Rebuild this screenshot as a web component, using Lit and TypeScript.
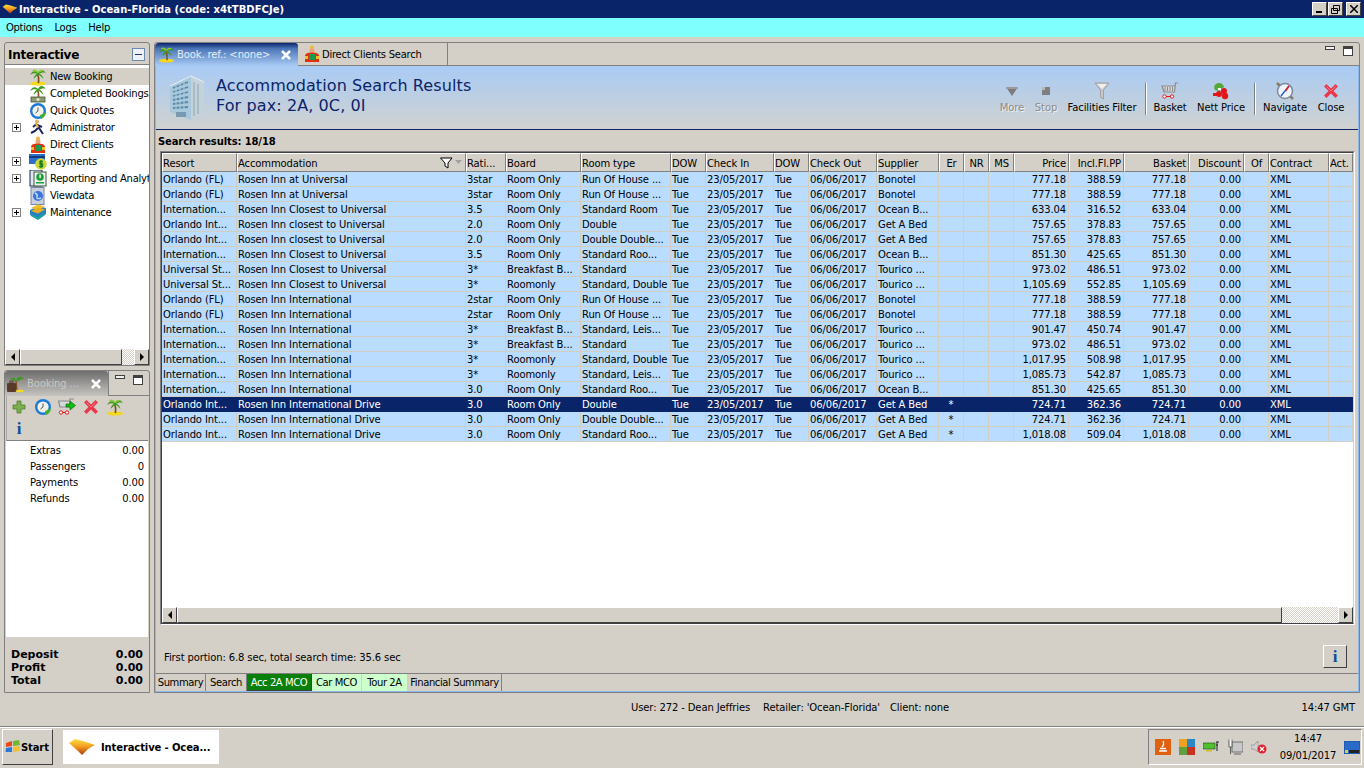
import { LitElement, html, svg, css } from "lit";
import { customElement } from "lit/decorators.js";

const ic = (w: number, h: number, vb: string, body: unknown) =>
  html`<svg class="ic" width=${w} height=${h} viewBox=${vb}>${body}</svg>`;

const palm = (w = 18) => ic(w, w, "0 0 18 18", svg`
  <ellipse cx="9" cy="15.5" rx="8" ry="2" fill="#f4d81c"/>
  <path d="M9.5 15C10 11 9.5 8 8.5 5.5" stroke="#7a4b1a" stroke-width="1.6" fill="none"/>
  <path d="M9 5C6 2 3 3 1 7 4 5 6 5 9 6ZM9 5C11 1 14 1 17 5 14 4 12 5 9 6ZM9 5C7 6 5 8 4.5 11 6.5 9 8 8 9 6.5ZM9 5C12 6 14 8 14.5 11 12.5 8.5 11 7.5 9 6.5Z" fill="#3d9a1c"/>
  <path d="M9 4C7 1 5 1 3 3 5 3 7 4 9 5ZM9 4C11 1.5 13 1.5 15 3 13 3 11 4 9 5Z" fill="#8ac832"/>`);
const palmMoney = () => ic(18, 18, "0 0 18 18", svg`
  <path d="M9.5 12C10 9 9.5 7 8.5 5" stroke="#7a4b1a" stroke-width="1.6" fill="none"/>
  <path d="M9 4C6 1 3 2 1 6 4 4 6 4 9 5ZM9 4C11 0 14 0 17 4 14 3 12 4 9 5ZM9 4C7 5 5 7 4.5 10 6.5 8 8 7 9 5.5ZM9 4C12 5 14 7 14.5 10 12.5 7.5 11 6.5 9 5.5Z" fill="#3d9a1c"/>
  <rect x="2" y="12" width="14" height="5" fill="#8c9a70" stroke="#4a5238" stroke-width=".8"/><circle cx="9" cy="14.5" r="1.5" fill="#e8ecd0"/>`);
const clock = () => ic(18, 18, "0 0 18 18", svg`
  <circle cx="9" cy="9" r="8" fill="#1e78d8"/><circle cx="9" cy="9" r="5.6" fill="#f2f2ea"/>
  <path d="M9 5.5V9L6.5 11" stroke="#555" fill="none"/>
  <path d="M12 17C15 16 17 13 17 10L13.5 12 11 13Z" fill="#44b030"/>`);
const runner = () => ic(18, 18, "0 0 18 18", svg`
  <circle cx="8" cy="2.5" r="2" fill="#e8b070"/>
  <path d="M7 4.5 10 9 14 15M9 9 6 12 2 14M7 5.5 13 8M7 5.5 4 8" stroke="#1c2460" stroke-width="2" fill="none"/>
  <path d="M7 4.5l2 4" stroke="#e8c030" stroke-width="2"/>`);
const santa = () => ic(18, 18, "0 0 18 18", svg`
  <circle cx="9" cy="2.5" r="2" fill="#f0b830"/><circle cx="9" cy="5.5" r="2.5" fill="#e8a878"/>
  <path d="M2 17V11C2 8.5 5 7.5 9 7.5S16 8.5 16 11V17Z" fill="#e03010"/>
  <rect x="6" y="9" width="6" height="6" fill="#1c9a50"/><rect x="2" y="11" width="3" height="3" fill="#f0c020"/><rect x="13" y="11" width="3" height="3" fill="#f0c020"/>`);
const payments = () => ic(18, 18, "0 0 18 18", svg`
  <rect x="0" y="1" width="16" height="10" fill="#2a70c8"/><rect x="0" y="3" width="16" height="2" fill="#123a80"/>
  <circle cx="12" cy="11" r="5.8" fill="#c8d838"/>
  <path d="M14 8.5H11V11H13.5V13.5H10M12 7V15" stroke="#1c7a20" stroke-width="1.3" fill="none"/>`);
const report = () => ic(18, 18, "0 0 18 18", svg`
  <rect x="1" y="0" width="12" height="16" fill="#dfe6ee" stroke="#1c2a50"/>
  <rect x="5" y="2" width="12" height="14" fill="#eef2f4" stroke="#3a5a3a"/>
  <circle cx="11" cy="7" r="3.8" fill="#1ca030"/><rect x="10.4" y="4.5" width="1.4" height="3.5" fill="#fff"/><rect x="7" y="12" width="8" height="1.5" fill="#1ca030"/>`);
const viewdata = () => ic(18, 18, "0 0 18 18", svg`
  <rect x="2" y="0.5" width="13" height="17" fill="#c8cede" stroke="#7a86a4"/>
  <circle cx="9" cy="9" r="5" fill="#3a74d8"/><path d="M6 6c2 1 3 2 2 4s2 2 4 1" stroke="#bcd8f8" stroke-width="1.4" fill="none"/>`);
const maintenance = () => ic(18, 18, "0 0 18 18", svg`
  <path d="M1 6 9 2 17 4V10L9 15 1 11Z" fill="#2a80c0"/><path d="M2 4 9 0.5 16 2.5 9 6Z" fill="#f0c030"/>
  <path d="M2 7 9 3.5 16 5.5 9 9.5Z" fill="#e8b020"/><path d="M2 10 9 13 16 9V11L9 16 2 12Z" fill="#1ca0a0"/>`);
const hotel = () => ic(38, 48, "0 0 38 48", svg`
  <path d="M2 12 23 2V46L2 38Z" fill="#a9c8dc"/><path d="M23 2 36 8V40L23 46Z" fill="#c4d2da"/>
  <path d="M2 12 23 2 36 8" stroke="#e8f0f4" fill="none"/>
  <path d="M5 14 20 8M5 18 20 13M5 22 20 18M5 26 20 23M5 30 20 28M5 34 20 33" stroke="#5a88a8" stroke-width="1.8"/>
  <path d="M8 12V37M12 10V38M16 8V39" stroke="#a9c8dc" stroke-width="1.2"/>
  <path d="M26 8V42M30 10V40" stroke="#a8bcc8" stroke-width="2"/>
  <rect x="8" y="38" width="10" height="5" fill="#7a98b0"/>`);
const xIcon = (w = 16) => ic(w, w, "0 0 16 16", svg`
  <path d="M3.5 3.5 12.5 12.5M12.5 3.5 3.5 12.5" stroke="#e8384a" stroke-width="3.5" stroke-linecap="square"/>
  <path d="M3.5 3.5 8 8 12.5 3.5" stroke="#f08090" stroke-width="1" fill="none"/>`);
const funnel = () => ic(16, 18, "0 0 16 18", svg`
  <path d="M1 1H15L9.5 8V17L6.5 15V8Z" fill="#c8c8c8" stroke="#a0a0a0"/><path d="M3 2H13L8 7Z" fill="#f0f0f0"/>`);
const cart = () => ic(18, 18, "0 0 18 18", svg`
  <path d="M17 1H14.5L13.5 10H3L1 4H14" stroke="#8a8a8a" fill="#d4d8d8" stroke-width="1.2"/>
  <path d="M4 5V9M6.5 5V9M9 5V9M11.5 5V9" stroke="#8a8a8a"/>
  <circle cx="3.5" cy="14.5" r="1.7" fill="#fff" stroke="#e01818"/><circle cx="11" cy="14.5" r="1.7" fill="#fff" stroke="#e01818"/><path d="M5 14.5H9.5" stroke="#e01818"/>`);
const cartGo = () => ic(18, 18, "0 0 18 18", svg`
  <path d="M16 1H12L11.5 9H2L0.5 3H12" stroke="#8a8a8a" fill="#d4d8d8" stroke-width="1.2"/>
  <circle cx="3" cy="14.5" r="1.7" fill="#fff" stroke="#e01818"/><circle cx="9" cy="14.5" r="1.7" fill="#fff" stroke="#e01818"/><path d="M4.5 14.5H7.5" stroke="#e01818"/>
  <path d="M8 6H12V3L17.5 7.5 12 12V9H8Z" fill="#10c010" stroke="#085808" stroke-width=".6"/>`);
const nett = () => ic(18, 18, "0 0 18 18", svg`
  <path d="M4 2C7 0 11 1 12 5L7 9 3 8C1.5 6 2 3 4 2Z" fill="#54a838"/>
  <circle cx="7" cy="12" r="3" fill="#e01818"/><circle cx="12" cy="9" r="3" fill="#e01818"/><circle cx="13" cy="14" r="3.2" fill="#e01818"/>
  <rect x="1" y="11" width="4" height="3" fill="#e01818"/><rect x="6" y="6" width="3" height="2" fill="#fff"/>`);
const compass = () => ic(20, 20, "0 0 20 20", svg`
  <path d="M2 2 5 5M18 18 15 15" stroke="#8a7a5a" stroke-width="2.5"/>
  <circle cx="10" cy="10" r="7.5" fill="#f0f4f8" stroke="#7a8aa0" stroke-width="1.5"/>
  <path d="M14 5 10 10 6 15" stroke="#2a60c8" stroke-width="1.5"/><path d="M14 5 10.5 10" stroke="#e02020" stroke-width="1.5"/>`);
const plus = () => ic(14, 14, "0 0 14 14", svg`
  <path d="M5 1H9V5H13V9H9V13H5V9H1V5H5Z" fill="#7ab04c" stroke="#4e7e34" stroke-width=".8"/>`);
const suitcase = () => ic(18, 18, "0 0 18 18", svg`
  <path d="M9 5C11 1 14 1 17 4 14 3.5 12 5 11 6.5ZM9 5C7 2 5 2 3 4 5 4 7 5 8 6.5Z" fill="#3d9a1c"/>
  <path d="M9 6 10 16" stroke="#7a4b1a" stroke-width="1.3"/><ellipse cx="13" cy="16" rx="4" ry="1.3" fill="#f4d81c"/>
  <rect x="0" y="8" width="9" height="9" rx="1" fill="#5a3a2a"/><rect x="3" y="6" width="3" height="2" fill="none" stroke="#5a3a2a"/>`);
const logo = (id: string, w: number, h: number) => ic(w, h, "0 0 28 18", svg`
  <defs><linearGradient id=${id} x1="0" x2="0" y1="0" y2="1"><stop offset="0" stop-color="#ffe040"/><stop offset=".5" stop-color="#f09820"/><stop offset="1" stop-color="#a83810"/></linearGradient></defs>
  <path d="M1 5 7 1 15 3 27 7 20 11 14 17 10 13Z" fill="url(#${id})"/>`);
const winFlag = () => ic(16, 16, "0 0 16 16", svg`
  <path d="M1 4 7 2V7L1 8Z" fill="#e84a20"/><path d="M8 2 14 1 15 6 8 7Z" fill="#70b830"/>
  <path d="M1 9 7 8V13L0.5 13Z" fill="#2a78d8"/><path d="M8 8 15 7 14.5 12 8 13Z" fill="#f0c030"/>`);
const colInfo = () => html`<span class="inf">i</span>`;

const MORE = ic(16, 16, "0 0 16 16", svg`<path d="M2 4H14L8 13Z" fill="#7c7c7c"/><path d="M2 4H14V6H2Z" fill="#9a9a9a"/>`);
const STOP = ic(16, 16, "0 0 16 16", svg`<rect x="4" y="4" width="8" height="8" fill="#7f7f7f"/><rect x="4" y="4" width="3" height="3" fill="#b8b8b8"/>`);

const COLS: [string, string][] = [
  ["Resort", "l"], ["Accommodation", "l"], ["Rati...", "l"], ["Board", "l"], ["Room type", "l"], ["DOW", "l"], ["Check In", "l"],
  ["DOW", "l"], ["Check Out", "l"], ["Supplier", "l"], ["Er", "c"], ["NR", "c"], ["MS", "c"], ["Price", "r"], ["Incl.Fl.PP", "r"],
  ["Basket", "r"], ["Discount", "r"], ["Of", "c"], ["Contract", "l"], ["Act.", "l"],
];

type R = [string, string, string, string, string, string, string, string, string, string];
const D: R[] = [
  ["Orlando (FL)", "Rosen Inn at Universal", "3star", "Room Only", "Run Of House ...", "Bonotel", "", "777.18", "388.59", "777.18"],
  ["Orlando (FL)", "Rosen Inn at Universal", "3star", "Room Only", "Run Of House ...", "Bonotel", "", "777.18", "388.59", "777.18"],
  ["Internation...", "Rosen Inn Closest to Universal", "3.5", "Room Only", "Standard Room", "Ocean B...", "", "633.04", "316.52", "633.04"],
  ["Orlando Int...", "Rosen Inn closest to Universal", "2.0", "Room Only", "Double", "Get A Bed", "", "757.65", "378.83", "757.65"],
  ["Orlando Int...", "Rosen Inn closest to Universal", "2.0", "Room Only", "Double Double...", "Get A Bed", "", "757.65", "378.83", "757.65"],
  ["Internation...", "Rosen Inn Closest to Universal", "3.5", "Room Only", "Standard Roo...", "Ocean B...", "", "851.30", "425.65", "851.30"],
  ["Universal St...", "Rosen Inn Closest to Universal", "3*", "Breakfast B...", "Standard", "Tourico ...", "", "973.02", "486.51", "973.02"],
  ["Universal St...", "Rosen Inn Closest to Universal", "3*", "Roomonly", "Standard, Double", "Tourico ...", "", "1,105.69", "552.85", "1,105.69"],
  ["Orlando (FL)", "Rosen Inn International", "2star", "Room Only", "Run Of House ...", "Bonotel", "", "777.18", "388.59", "777.18"],
  ["Orlando (FL)", "Rosen Inn International", "2star", "Room Only", "Run Of House ...", "Bonotel", "", "777.18", "388.59", "777.18"],
  ["Internation...", "Rosen Inn International", "3*", "Breakfast B...", "Standard, Leis...", "Tourico ...", "", "901.47", "450.74", "901.47"],
  ["Internation...", "Rosen Inn International", "3*", "Breakfast B...", "Standard", "Tourico ...", "", "973.02", "486.51", "973.02"],
  ["Internation...", "Rosen Inn International", "3*", "Roomonly", "Standard, Double", "Tourico ...", "", "1,017.95", "508.98", "1,017.95"],
  ["Internation...", "Rosen Inn International", "3*", "Roomonly", "Standard, Leis...", "Tourico ...", "", "1,085.73", "542.87", "1,085.73"],
  ["Internation...", "Rosen Inn International", "3.0", "Room Only", "Standard Roo...", "Ocean B...", "", "851.30", "425.65", "851.30"],
  ["Orlando Int...", "Rosen Inn International Drive", "3.0", "Room Only", "Double", "Get A Bed", "*", "724.71", "362.36", "724.71"],
  ["Orlando Int...", "Rosen Inn International Drive", "3.0", "Room Only", "Double Double...", "Get A Bed", "*", "724.71", "362.36", "724.71"],
  ["Orlando Int...", "Rosen Inn International Drive", "3.0", "Room Only", "Standard Roo...", "Get A Bed", "*", "1,018.08", "509.04", "1,018.08"],
];

const NAV: [unknown, string, boolean][] = [
  [palm(), "New Booking", false], [palmMoney(), "Completed Bookings", false], [clock(), "Quick Quotes", false],
  [runner(), "Administrator", true], [santa(), "Direct Clients", false], [payments(), "Payments", true],
  [report(), "Reporting and Analytics", true], [viewdata(), "Viewdata", false], [maintenance(), "Maintenance", true],
];

const minmax = () => html`<span class="mm"><i class="mn"></i><i class="mx"></i></span>`;
const bigX = () => html`<svg class="x" viewBox="0 0 12 12"><path d="M2 2 10 10M10 2 2 10" stroke="#fff" stroke-width="2.5"/></svg>`;

@customElement("app-root")
export class AppRoot extends LitElement {
  static styles = css`
    :host { display: block; width: 1364px; height: 768px; overflow: hidden; }
    * { box-sizing: border-box; }
    .ic { display: block; flex: none; }
    .root { width: 1364px; height: 768px; display: flex; flex-direction: column; background: #d4d0c8; color: #000;
      font: 10px/13px "DejaVu Sans", sans-serif; letter-spacing: -0.12px; white-space: nowrap; }
    .title { height: 18px; background: #0a246a; color: #fff; display: flex; align-items: center; padding: 0 3px 0 2px; gap: 1px; font-weight: 700; font-size: 10px; letter-spacing: 0.03px; }
    .title .t { flex: 1; }
    .wb { display: flex; }
    .wb b { width: 15px; height: 14px; background: #d4d0c8; border: 1px solid; border-color: #fff #404040 #404040 #fff; margin-left: 1px; display: flex; align-items: center; justify-content: center; }
    .wb b.cl { margin-left: 3px; }
    .menu { height: 19px; background: #80ffff; display: flex; align-items: center; gap: 12px; padding: 0 6px; letter-spacing: -0.3px; }
    .work { flex: 1; min-height: 0; display: flex; gap: 4px; padding: 5px 4px 2px; }
    .left { width: 146px; display: flex; flex-direction: column; gap: 4px; }
    .panel { border: 1px solid #808080; border-radius: 3px 3px 0 0; display: flex; flex-direction: column; min-height: 0; }
    .p1 { height: 324px; }
    .p2 { height: 323px; }
    .phead { height: 22px; display: flex; align-items: center; justify-content: space-between; padding: 2px 4px 0 3px; border-bottom: 1px solid #808080; font: 700 12px/16px "DejaVu Sans", sans-serif; letter-spacing: -.25px; }
    .collapse { width: 13px; height: 13px; position: relative; border: 1px solid #6a8ab0; background: #eef2f8; }
    .collapse::after { content: ""; position: absolute; left: 2px; right: 2px; top: 5px; height: 1px; background: #1a3a70; }
    .tree { flex: 1; background: #fff; border-top: 1px solid #fff; padding-top: 2px; min-height: 0; overflow: hidden; letter-spacing: -0.27px; }
    .node { height: 17px; display: flex; align-items: center; padding-left: 7px; }
    .node.sel { background: #d4d0c8; }
    .pm { width: 9px; height: 9px; border: 1px solid #808080; position: relative; margin-right: 8px; background: #fff; flex: none; }
    .pm::before { content: ""; position: absolute; left: 1px; right: 1px; top: 3px; height: 1px; background: #000; }
    .pm::after { content: ""; position: absolute; top: 1px; bottom: 1px; left: 3px; width: 1px; background: #000; }
    .nopm { width: 17px; flex: none; }
    .node span.l { margin-left: 3px; }
    .sb { height: 16px; display: flex; background: #d4d0c8; flex: none; }
    .btn { width: 15px; background: #d4d0c8; border: 1px solid; border-color: #fff #404040 #404040 #fff; display: flex; align-items: center; justify-content: center; flex: none; }
    .la { width: 0; height: 0; border: 4px solid transparent; border-right: 4px solid #000; border-left: 0; }
    .ra { width: 0; height: 0; border: 4px solid transparent; border-left: 4px solid #000; border-right: 0; }
    .thumb { background: #d4d0c8; border: 1px solid; border-color: #fff #404040 #404040 #fff; flex: none; }
    .t1 { width: 102px; }
    .t2 { width: 1105px; }
    .hatch { flex: 1; background: repeating-conic-gradient(#fff 0 25%, #d4d0c8 0 50%) 0 0 / 2px 2px; }
    .ptab { height: 25px; display: flex; flex: none; border-bottom: 0; }
    .ptab .on { width: 103px; background: linear-gradient(#6e6e6e, #c6c4c0); border-radius: 3px 3px 0 0; display: flex; align-items: center; padding: 0 6px 0 2px; gap: 2px; color: #c8c8c4; }
    .ptab .on span { flex: 1; }
    .ptab .rest { flex: 1; border-bottom: 1px solid #808080; border-left: 1px solid #808080; }
    .x { width: 12px; height: 12px; flex: none; }
    .mm { display: flex; gap: 8px; align-items: flex-start; justify-content: flex-end; padding: 2px 6px 0 0; }
    .mn { display: block; width: 10px; height: 4px; border: 1px solid #404040; background: #f0f0f0; margin-top: 2px; }
    .mx { display: block; width: 10px; height: 10px; border: 1px solid #404040; border-top-width: 3px; background: #fff; margin-top: 2px; }
    .tools { height: 45px; margin: 0 1px; padding: 0 23px 0 3px; display: flex; flex-wrap: wrap; align-content: flex-start; column-gap: 6px; border-left: 1px solid #a8a8a8; border-bottom: 1px solid #808080; flex: none; }
    .tools > * { height: 22px; display: flex; align-items: center; justify-content: center; width: 18px; }
    .inf { font: 700 17px/20px "Liberation Serif", serif; color: #0a4ea0; text-align: center; }
    .list { height: 196px; background: #fff; margin: 0 1px; padding-top: 1px; flex: none; }
    .lrow { height: 16px; display: flex; justify-content: space-between; align-items: center; padding: 0 4px 0 24px; }
    .totals { flex: 1; padding: 11px 5px 0 5px; margin: 0 1px; font-weight: 700; font-size: 11px; letter-spacing: 0; }
    .trow { height: 13px; display: flex; justify-content: space-between; align-items: center; }
    .mainp { flex: 1; min-width: 0; border: 1px solid #808080; border-radius: 3px 3px 0 0; display: flex; flex-direction: column; }
    .tabs { height: 23px; display: flex; flex: none; border-bottom: 1px solid #808080; }
    .tab { display: flex; align-items: center; height: 22px; }
    .tab.a { width: 143px; margin-bottom: -1px; height: 23px; padding: 0 6px 0 3px; gap: 2px; background: linear-gradient(#0a246a 0, #4d76b8 25%, #a9cbf5 100%); border-radius: 4px 3px 0 0; color: #e8eef8; }
    .tab.i { width: 150px; padding-left: 5px; gap: 1px; border-right: 1px solid #808080; background: #d4d0c8; letter-spacing: -0.25px; }
    .tab .sp { flex: 1; }
    .tabs .mm { flex: 1; padding: 1px 6px 0 0; }
    .body { flex: 1; min-height: 0; border: 1px solid #8cb8f0; border-top: 0; display: flex; flex-direction: column; }
    .band { height: 64px; flex: none; border-bottom: 1px solid #0a246a; padding: 0 0 0 12px; display: flex; align-items: center;
      background: linear-gradient(#a9cbf5, #d0d2d0); }
    .hd { margin-left: 10px; font: 16px/20px "DejaVu Sans", sans-serif; letter-spacing: .1px; color: #0a246a; flex: 1; margin-bottom: 3px; }
    .bar { display: flex; align-items: flex-start; height: 46px; }
    .ti { display: flex; flex-direction: column; align-items: center; gap: 1px; height: 42px; }
    .ti .ib { height: 25px; padding-top: 8px; display: flex; align-items: center; justify-content: center; }
    .ti.off { color: #8c8c8c; text-shadow: 1px 1px 0 #f0f0f0; }
    .sep { width: 2px; height: 32px; border-left: 1px solid #808080; border-right: 1px solid #fff; margin-top: 8px; }
    .w34 { width: 34px; } .w78 { width: 78px; } .w46 { width: 46px; } .w56 { width: 56px; } .w58 { width: 58px; }
    .ml4 { margin-left: 4px; } .ml5 { margin-left: 5px; } .mr10 { margin-right: 10px; }
    .sr { height: 21px; flex: none; display: flex; align-items: center; padding: 2px 0 0 2px; font-weight: 700; }
    .frame { margin: 0 3px 0 4px; height: 474px; flex: none; border: 1px solid; border-color: #808080 #fff #fff #808080; display: flex; flex-direction: column; }
    .frame2 { flex: 1; border: 1px solid; border-color: #404040 #d4d0c8 #404040 #404040; display: flex; flex-direction: column; min-height: 0; background: #fff; }
    .g { flex: none; display: grid; grid-template-columns: 75px 229px 40px 75px 90px 35px 68px 35px 68px 62px 25px 25px 25px 55px 55px 65px 55px 25px 60px 24px; }
    .h { height: 19px; }
    .h div { background: #d4d0c8; border: 1px solid; border-color: #fff #808080 #808080 #fff; padding: 1px 2px 0 0; display: flex; align-items: center; overflow: hidden; }
    .h div.c { justify-content: center; padding: 1px 0 0; }
    .h div.r { justify-content: flex-end; padding-right: 2px; }
    .h div .gr { flex: 1; }
    .row { height: 15px; background: #b9dcff; }
    .row div { border-right: 1px solid #d2cec6; border-bottom: 1px solid #d2cec6; line-height: 15px; padding-left: 1px; overflow: hidden; }
    .row div.r { text-align: right; padding: 0 2px 0 0; }
    .row div.c { text-align: center; padding: 0; }
    .row.sel { background: #0a246a; color: #fff; }
    .row.sel div { border-color: #0a246a; }
    .fill { flex: 1; background: #fff; }
    .foot { flex: 1; min-height: 0; display: flex; align-items: flex-end; justify-content: space-between; padding: 0 11px 5px 8px; border-bottom: 1px solid #808080; }
    .foot span.tx { padding-bottom: 4px; }
    .infobtn { width: 24px; height: 23px; background: #d4d0c8; border: 1px solid; border-color: #fff #404040 #404040 #fff; display: flex; align-items: center; justify-content: center; }
    .btabs { height: 17px; display: flex; flex: none; letter-spacing: -0.4px; }
    .bt { display: flex; align-items: center; justify-content: center; border-right: 1px solid #808080; height: 17px; }
    .bt.g1 { background: #0a7f0a; color: #fff; border-right: 1px solid #404040; border-bottom: 1px solid #404040; }
    .bt.g2 { background: #ccffcc; border-right: 1px solid #d4d0c8; }
    .b1 { width: 50px; } .b2 { width: 41px; } .b3 { width: 65px; } .b4 { width: 50px; } .b5 { width: 46px; } .b6 { width: 94px; }
    .status { height: 31px; flex: none; display: flex; align-items: flex-start; padding: 6px 9px 0 631px; }
    .status span { height: 13px; }
    .status .u { width: 132px; } .status .re { width: 127px; } .status .cl { flex: 1; }
    .task { height: 42px; flex: none; border-top: 1px solid #808080; box-shadow: inset 0 1px 0 #fff; display: flex; padding: 2px 2px 3px; align-items: stretch; background: #d4d0c8; }
    .start { width: 51px; border: 1px solid; border-color: #fff #404040 #404040 #fff; display: flex; align-items: center; padding-left: 2px; font-weight: 700; }
    .appb { width: 158px; margin-left: 9px; background: #fff; border: 1px solid #d4d0c8; display: flex; align-items: center; gap: 5px; padding-left: 5px; font-weight: 700; }
    .taskgap { flex: 1; }
    .tray { width: 214px; border: 1px solid; border-color: #808080 #fff #fff #808080; display: flex; align-items: center; padding-left: 6px; gap: 8px; }
    .clk { width: 66px; margin-right: -5px; text-align: center; line-height: 17px; }
  `;

  render() {
    return html`<div class="root">
      <div class="title">${logo("lg1", 16, 14)}<span class="t">Interactive - Ocean-Florida (code: x4tTBDFCJe)</span>
        <div class="wb"><b><svg width="8" height="8"><rect y="6" width="6" height="2" /></svg></b><b><svg width="9" height="9"><path d="M2.5.5h6v5h-6zM.5 3.5h6v5h-6z" fill="none" stroke="#000"/></svg></b><b class="cl"><svg width="8" height="8"><path d="M0 0 8 8M8 0 0 8" stroke="#000" stroke-width="1.5"/></svg></b></div>
      </div>
      <div class="menu"><span>Options</span><span>Logs</span><span>Help</span></div>
      <div class="work">
        <div class="left">
          <div class="panel p1">
            <div class="phead"><span>Interactive</span><i class="collapse"></i></div>
            <div class="tree">
              ${NAV.map(([i, t, e], n) => html`<div class="node ${n === 0 ? "sel" : ""}">${e ? html`<i class="pm"></i>` : html`<i class="nopm"></i>`}${i}<span class="l">${t}</span></div>`)}
            </div>
            <div class="sb"><div class="btn"><i class="la"></i></div><div class="thumb t1"></div><div class="hatch"></div><div class="btn"><i class="ra"></i></div></div>
          </div>
          <div class="panel p2">
            <div class="ptab"><div class="on">${suitcase()}<span>Booking ...</span>${bigX()}</div><div class="rest">${minmax()}</div></div>
            <div class="tools">
              <span>${plus()}</span><span>${clock()}</span><span>${cartGo()}</span><span>${xIcon()}</span><span>${palm()}</span><span>${colInfo()}</span>
            </div>
            <div class="list">
              <div class="lrow"><span>Extras</span><span>0.00</span></div>
              <div class="lrow"><span>Passengers</span><span>0</span></div>
              <div class="lrow"><span>Payments</span><span>0.00</span></div>
              <div class="lrow"><span>Refunds</span><span>0.00</span></div>
            </div>
            <div class="totals">
              <div class="trow"><span>Deposit</span><span>0.00</span></div>
              <div class="trow"><span>Profit</span><span>0.00</span></div>
              <div class="trow"><span>Total</span><span>0.00</span></div>
            </div>
          </div>
        </div>
        <div class="mainp">
          <div class="tabs">
            <div class="tab a">${palm(17)}<span class="sp">Book. ref.: &lt;none&gt;</span>${bigX()}</div>
            <div class="tab i">${santa()}<span class="sp">Direct Clients Search</span></div>
            ${minmax()}
          </div>
          <div class="body">
            <div class="band">
              ${hotel()}
              <div class="hd">Accommodation Search Results<br />For pax: 2A, 0C, 0I</div>
              <div class="bar">
                <div class="ti off w34"><span class="ib">${MORE}</span><span>More</span></div>
                <div class="ti off w34"><span class="ib">${STOP}</span><span>Stop</span></div>
                <div class="ti w78"><span class="ib">${funnel()}</span><span>Facilities Filter</span></div>
                <div class="sep ml4"></div>
                <div class="ti w46"><span class="ib">${cart()}</span><span>Basket</span></div>
                <div class="ti w56"><span class="ib">${nett()}</span><span>Nett Price</span></div>
                <div class="sep ml5"></div>
                <div class="ti w58"><span class="ib">${compass()}</span><span>Navigate</span></div>
                <div class="ti w34 mr10"><span class="ib">${xIcon()}</span><span>Close</span></div>
              </div>
            </div>
            <div class="sr">Search results: 18/18</div>
            <div class="frame"><div class="frame2">
              <div class="g h">${COLS.map(([t, a], i) => html`<div class=${a}>${t}${i === 1 ? html`<span class="gr"></span><svg width="23" height="12" viewBox="0 0 23 12" class="ic"><path d="M.5 1H12L8 6V11L5 9V6Z" fill="#fff" stroke="#000"/><path d="M15 3H22L18.5 7Z" fill="#a0a0a0"/></svg>` : ""}</div>`)}</div>
              ${D.map((r, i) => html`<div class="g row ${i === 15 ? "sel" : ""}">
                <div>${r[0]}</div><div>${r[1]}</div><div>${r[2]}</div><div>${r[3]}</div><div>${r[4]}</div><div>Tue</div><div>23/05/2017</div><div>Tue</div><div>06/06/2017</div><div>${r[5]}</div>
                <div class="c">${r[6]}</div><div></div><div></div><div class="r">${r[7]}</div><div class="r">${r[8]}</div><div class="r">${r[9]}</div><div class="r">0.00</div><div></div><div>XML</div><div></div>
              </div>`)}
              <div class="fill"></div>
              <div class="sb"><div class="btn"><i class="la"></i></div><div class="thumb t2"></div><div class="hatch"></div><div class="btn"><i class="ra"></i></div></div>
            </div></div>
            <div class="foot"><span class="tx">First portion: 6.8 sec, total search time: 35.6 sec</span><div class="infobtn">${colInfo()}</div></div>
            <div class="btabs">
              <div class="bt b1">Summary</div><div class="bt b2">Search</div><div class="bt g1 b3">Acc 2A MCO</div><div class="bt g2 b4">Car MCO</div><div class="bt g2 b5">Tour 2A</div><div class="bt b6">Financial Summary</div>
            </div>
          </div>
        </div>
      </div>
      <div class="status"><span class="u">User: 272 - Dean Jeffries</span><span class="re">Retailer: 'Ocean-Florida'</span><span class="cl">Client: none</span><span>14:47 GMT</span></div>
      <div class="task">
        <div class="start">${winFlag()}Start</div>
        <div class="appb">${logo("lg2", 28, 18)}Interactive - Ocea...</div>
        <div class="taskgap"></div>
        <div class="tray">
          <svg class="ic" width="16" height="16" viewBox="0 0 16 16"><rect width="16" height="16" fill="#e06010"/><path d="M4 12H12M5 9.5H11M7 8C9 6 9 4 8 2" stroke="#fff" stroke-width="1.3" fill="none"/></svg>
          <svg class="ic" width="16" height="16" viewBox="0 0 16 16"><rect width="8" height="8" fill="#f0a020"/><rect x="8" width="8" height="8" fill="#2a88c8"/><rect y="8" width="8" height="8" fill="#60a040"/><rect x="8" y="8" width="8" height="8" fill="#c83020"/></svg>
          <svg class="ic" width="16" height="12" viewBox="0 0 16 12"><rect y="2" width="12" height="6" fill="#50c030" stroke="#204010" stroke-width=".6"/><path d="M13 1H16M13 4H15M14 1V10" stroke="#222"/><rect x="3" y="9" width="6" height="1.5" fill="#d0c020"/></svg>
          <svg class="ic" width="16" height="16" viewBox="0 0 16 16"><rect x="5" y="3" width="11" height="10" fill="#c8c8c8" stroke="#707070"/><path d="M2 0.5V8H5V0.5M3.5 8V15M7 15H14" stroke="#606060" fill="#fff"/></svg>
          <svg class="ic" width="16" height="16" viewBox="0 0 16 16"><path d="M0 6H3L7 2V13L3 10H0Z" fill="#d0d0d0" stroke="#808080" stroke-width=".6"/><circle cx="11" cy="10" r="4.5" fill="#e02030"/><path d="M9 8 13 12M13 8 9 12" stroke="#fff" stroke-width="1.3"/></svg>
          <div class="clk">14:47<br />09/01/2017</div>
          <svg class="ic" width="16" height="13" viewBox="0 0 16 13"><rect width="16" height="13" fill="#2a6ac8" stroke="#123a80" stroke-width=".6"/><rect x="5" y="9" width="10" height="3" fill="#222"/><rect x="1" y="9" width="3" height="3" fill="#e0d040"/></svg>
        </div>
      </div>
    </div>`;
  }
}
